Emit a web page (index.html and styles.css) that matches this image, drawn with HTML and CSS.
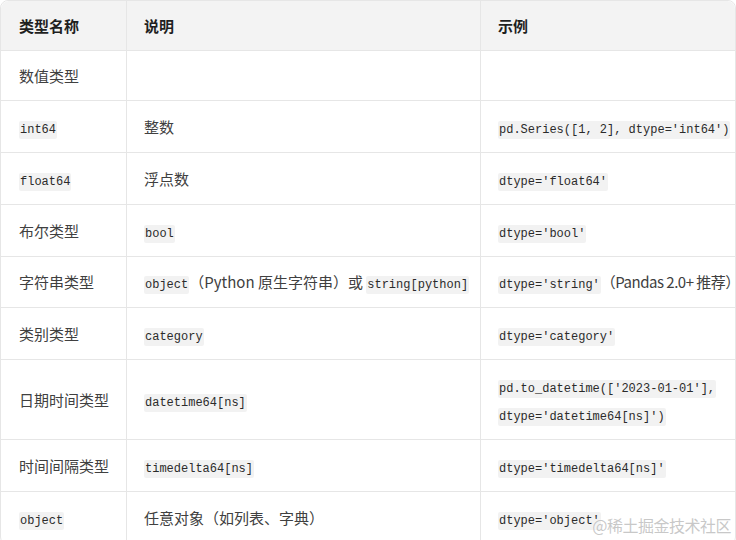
FILE: index.html
```html
<!DOCTYPE html>
<html lang="zh-CN">
<head>
<meta charset="utf-8">
<title>Pandas 数据类型</title>
<link rel="stylesheet" href="styles.css">
</head>
<body>
<div class="wrap">
  <table class="types">
    <colgroup>
      <col class="c1"><col class="c2"><col class="c3">
    </colgroup>
    <thead>
      <tr class="h50"><th>类型名称</th><th>说明</th><th>示例</th></tr>
    </thead>
    <tbody>
      <tr class="h50"><td>数值类型</td><td></td><td></td></tr>
      <tr><td><code>int64</code></td><td>整数</td><td><code>pd.Series([1, 2], dtype='int64')</code></td></tr>
      <tr><td><code>float64</code></td><td>浮点数</td><td><code>dtype='float64'</code></td></tr>
      <tr><td>布尔类型</td><td><code>bool</code></td><td><code>dtype='bool'</code></td></tr>
      <tr class="h51"><td>字符串类型</td><td><code>object</code>（Python 原生字符串）或 <code>string[python]</code></td><td><code>dtype='string'</code><span class="tight">（Pandas 2.0+ 推荐）</span></td></tr>
      <tr><td>类别类型</td><td><code>category</code></td><td><code>dtype='category'</code></td></tr>
      <tr class="h80"><td>日期时间类型</td><td><code>datetime64[ns]</code></td><td><code>pd.to_datetime(['2023-01-01'],</code><br><code>dtype='datetime64[ns]')</code></td></tr>
      <tr><td>时间间隔类型</td><td><code>timedelta64[ns]</code></td><td><code>dtype='timedelta64[ns]'</code></td></tr>
      <tr><td><code>object</code></td><td>任意对象（如列表、字典）</td><td><code>dtype='object'</code></td></tr>
    </tbody>
  </table>
  <div class="watermark">@稀土掘金技术社区</div>
</div>
</body>
</html>
```

FILE: styles.css
```css
html, body {
  margin: 0;
  padding: 0;
  background: #ffffff;
}
body {
  width: 736px;
  height: 540px;
  overflow: hidden;
  font-family: "Noto Sans CJK SC", "Noto Sans", sans-serif;
  font-size: 15px;
  color: #404040;
}
.wrap {
  position: relative;
  width: 736px;
  height: 540px;
  overflow: hidden;
}
.types {
  width: 736px;
  table-layout: fixed;
  border-collapse: separate;
  border-spacing: 0;
  border: 1px solid #e6e6e6;
  border-radius: 8px;
  box-sizing: border-box;
}
.c1 { width: 125px; }
.c2 { width: 354px; }
.c3 { width: 255px; }
.types tr { height: 52px; }
.types tr.h50 { height: 50px; }
.types tr.h51 { height: 51px; }
.types tr.h80 { height: 80px; }
.types th,
.types td {
  text-align: left;
  vertical-align: middle;
  white-space: nowrap;
  overflow: hidden;
  line-height: 28px;
  padding: 0 0 0 17px;
  border-bottom: 1px solid #e6e6e6;
  border-left: 1px solid #e6e6e6;
  box-sizing: border-box;
}
.types th:first-child,
.types td:first-child {
  border-left: none;
  padding-left: 18px;
}
.types td:last-child { overflow: visible; }
.types th {
  background: #f3f3f3;
  color: #1f1f1f;
  font-weight: 700;
}
.types th:first-child { border-top-left-radius: 8px; }
.types th:last-child { border-top-right-radius: 8px; }
.types code {
  font-family: "Liberation Mono", "DejaVu Sans Mono", monospace;
  font-size: 12px;
  line-height: 18px;
  color: #2b2b2b;
  background: #f2f2f2;
  border-radius: 2px;
  padding: 2px 1px;
}
.tight { letter-spacing: -0.5px; }
.watermark {
  position: absolute;
  right: 5px;
  bottom: 3px;
  font-size: 16px;
  line-height: 24px;
  color: rgba(190, 190, 190, 0.85);
  text-shadow: 0 0 2px #ffffff;
  letter-spacing: -0.5px;
}
```
